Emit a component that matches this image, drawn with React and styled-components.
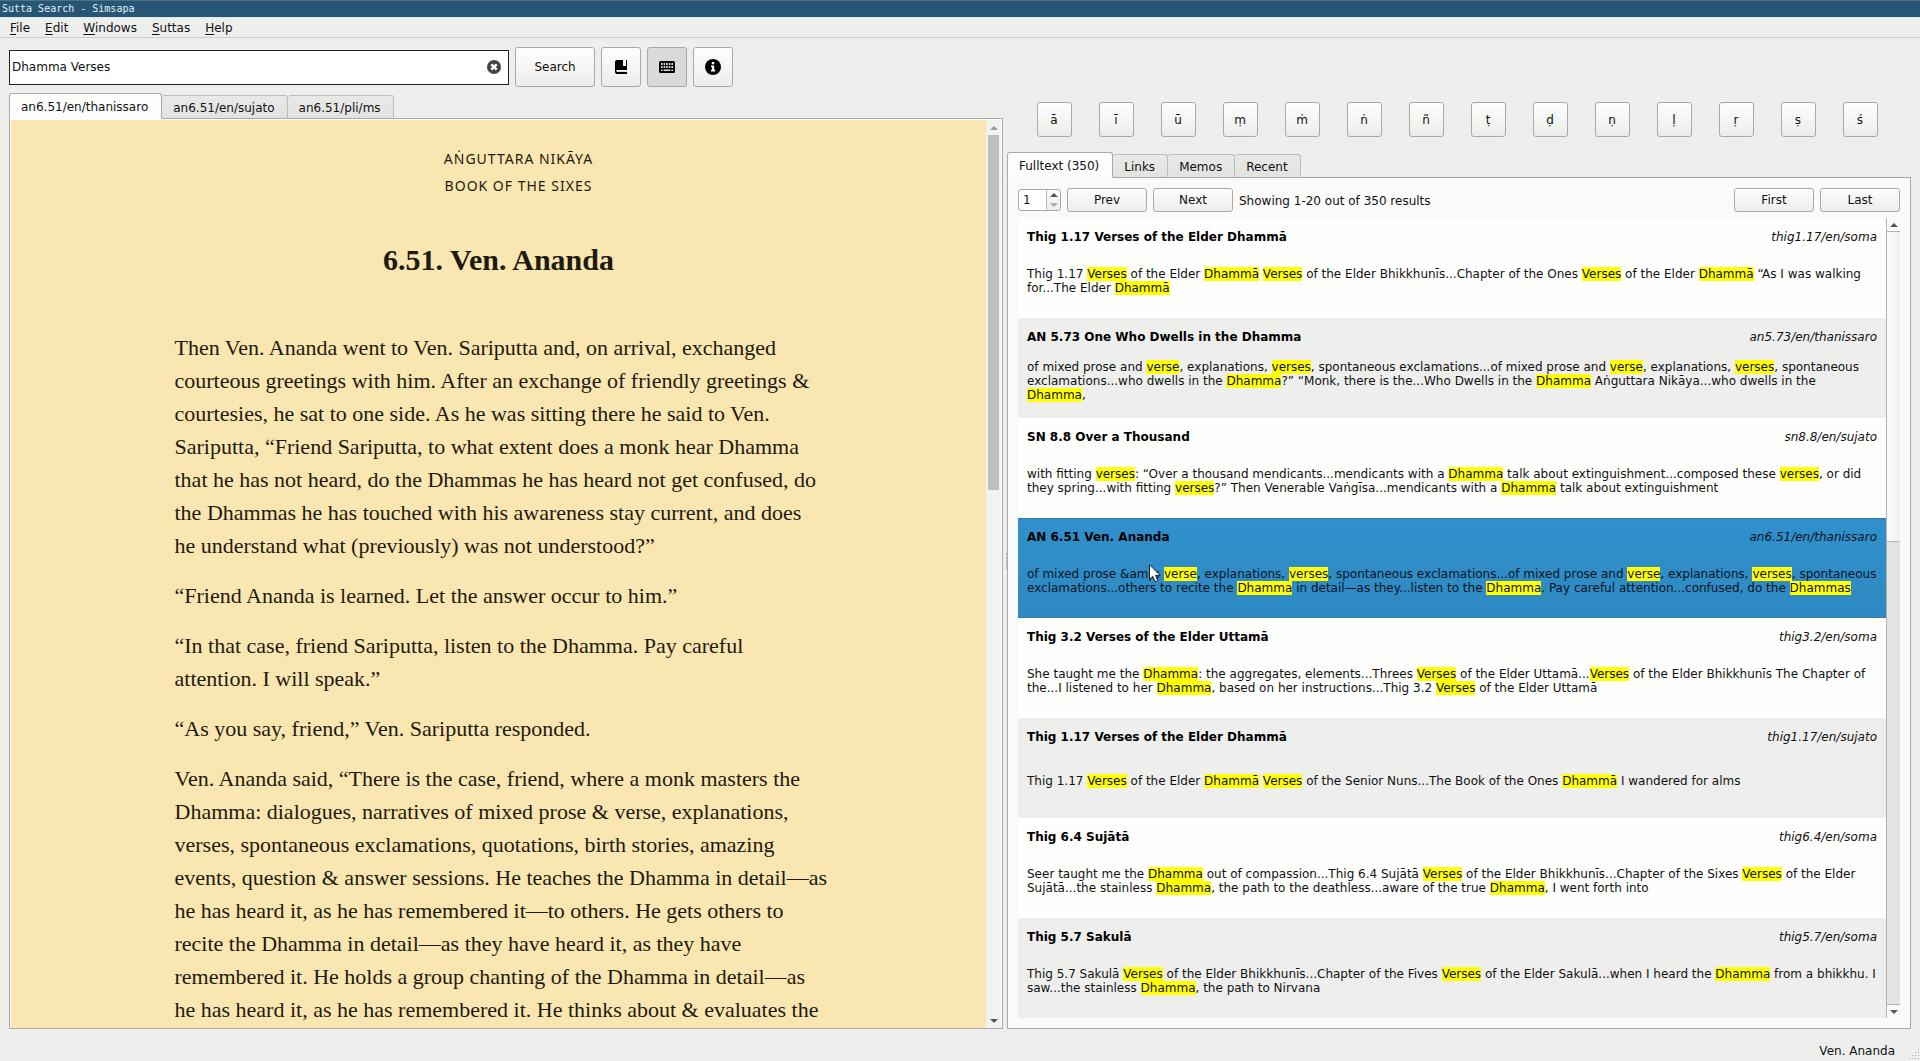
import React from "react";
import styled, { createGlobalStyle } from "styled-components";

const UI = '"DejaVu Sans", sans-serif';
const SERIF = '"Liberation Serif", serif';
const EDGE = "#a9a9a9";

const GlobalStyle = createGlobalStyle`
  *, *::before, *::after { box-sizing: border-box; }
  html, body { margin: 0; padding: 0; }
  body { background: #eeeeed; color: #111; font: 12px/14px ${UI}; overflow: hidden; }
  button, input { font: inherit; color: inherit; margin: 0; }
`;

const Window = styled.div`
  display: flex;
  flex-direction: column;
  height: 100vh;
`;

const TitleBar = styled.header`
  height: 18px;
  padding: 1px 2px 0;
  background: #265676;
  border-top: 1px solid #536f82;
  border-bottom: 1px solid #d9e9f2;
  color: #e6edf1;
  font: 10px/14px "DejaVu Sans Mono", monospace;
  white-space: pre;
`;

const MenuBar = styled.nav`
  display: flex;
  height: 20px;
  padding: 0 3px;
  border-bottom: 1px solid #cfcfce;
`;

const MenuItem = styled.button`
  padding: 1px 8px 0 7px;
  border: 0;
  background: none;
  line-height: 18px;
  span { text-decoration: underline; text-underline-offset: 2px; }
`;

const Toolbar = styled.form`
  display: flex;
  align-items: center;
  gap: 6px;
  padding: 9px 9px 6px;
`;

const SearchBox = styled.div`
  display: flex;
  align-items: center;
  flex: 0 1 500px;
  height: 35px;
  background: #fff;
  border: 1px solid #222;
`;

const SearchInput = styled.input`
  flex: 1;
  min-width: 0;
  height: 100%;
  padding: 0 2px;
  border: 0;
  outline: 0;
  background: transparent;
`;

const ClearButton = styled.button`
  display: flex;
  padding: 0 7px;
  border: 0;
  background: none;
`;

const Button = styled.button`
  display: flex;
  align-items: center;
  justify-content: center;
  flex: none;
  width: ${(p) => p.$w || 80}px;
  height: ${(p) => p.$h || 24}px;
  padding: 0;
  border: 1px solid ${EDGE};
  border-radius: 3px;
  background: ${(p) => (p.$pressed ? "#dadada" : "linear-gradient(#fefefe, #ececeb)")};
`;

const Panes = styled.main`
  display: flex;
  flex: 1;
  min-height: 0;
  padding: 0 9px;
`;

const Pane = styled.section`
  display: flex;
  flex-direction: column;
  flex: ${(p) => p.$grow} 1 0;
  min-width: 0;
`;

const Splitter = styled.div`
  align-self: center;
  width: 4px;
  height: 16px;
  border-right: 1px dotted #aaa;
`;

const Tabs = styled.div`
  display: flex;
  align-items: flex-end;
  height: 26px;
  margin-bottom: -1px;
`;

const Tab = styled.button`
  position: relative;
  height: ${(p) => (p.$active ? 26 : 24)}px;
  padding: ${(p) => (p.$active ? "2px 13px 0 11px" : "2px 12px 0 11px")};
  border: 1px solid ${(p) => (p.$active ? EDGE : "#bcbcbb")};
  border-bottom-color: ${(p) => (p.$active ? "#fdfdfd" : EDGE)};
  border-left-width: ${(p) => (p.$active ? 1 : 0)}px;
  border-radius: 3px 3px 0 0;
  background: ${(p) => (p.$active ? "#fdfdfc" : "linear-gradient(#e9e9e8, #e2e2e1)")};
  z-index: 1;
`;

const Frame = styled.div`
  display: flex;
  flex: 1;
  min-height: 0;
  border: 1px solid ${EDGE};
  padding: 1px 1px 0;
  background: #fdfdfc;
`;

const Article = styled.article`
  flex: 1;
  min-width: 0;
  overflow: hidden;
  background: #f9e6b1;
  color: #1f1a0e;
`;

const Column = styled.div`
  width: 648px;
  max-width: 100%;
  margin: 0 auto;
  padding-top: 25px;
`;

const Collection = styled.p`
  margin: 0;
  padding-left: 40px;
  text-align: center;
  text-transform: uppercase;
  font: 14px/27px "Noto Sans", sans-serif;
  letter-spacing: 1px;
`;

const Heading = styled.h1`
  margin: 41px 0 51px;
  text-align: center;
  font: bold 30px/40px ${SERIF};
`;

const Paragraph = styled.p`
  margin: 0 0 17px;
  font: 22px/33px ${SERIF};
`;

const Line = styled.span`
  display: block;
  white-space: pre;
`;

const PageScroll = styled.div`
  display: flex;
  flex-direction: column;
  align-items: center;
  flex: none;
  width: 15px;
  padding: 6px 0 5px;
  background: #f2f2f1;
`;

const PageThumb = styled.div`
  flex: 353;
  width: 11px;
  margin: 5px 0 0;
  background: #c0c0bf;
`;

const PageTrack = styled.div`
  flex: 527;
`;

const Arrow = styled.span`
  width: 0;
  height: 0;
  border: 4px solid transparent;
  ${(p) => (p.$down ? "border-bottom-width: 0; border-top-color" : "border-top-width: 0; border-bottom-color")}: ${(p) => p.$color || "#555"};
`;

const Keys = styled.div`
  display: grid;
  grid-template-columns: repeat(14, 1fr);
  justify-items: center;
  padding: 9px 20px 15px 16px;
`;

const Results = styled.div`
  display: flex;
  flex-direction: column;
  flex: 1;
  min-height: 0;
  border: 1px solid ${EDGE};
  background: #fafaf9;
  padding: 10px;
`;

const Pager = styled.div`
  display: flex;
  align-items: center;
  gap: 6px;
  margin-bottom: 6px;
`;

const PagerLabel = styled.span`
  flex: 1;
  padding-top: 2px;
`;

const Spin = styled.div`
  display: flex;
  width: 43px;
  height: 22px;
  border: 1px solid ${EDGE};
  border-radius: 3px;
  background: #fff;
`;

const SpinInput = styled.input`
  width: 28px;
  padding: 0 4px;
  border: 0;
  border-right: 1px solid #bbb;
  outline: 0;
  background: transparent;
`;

const SpinArrows = styled.div`
  display: flex;
  flex-direction: column;
  flex: 1;
  background: linear-gradient(#fafafa, #ededed);
  border-radius: 0 3px 3px 0;
`;

const SpinButton = styled.button`
  display: flex;
  align-items: center;
  justify-content: center;
  flex: 1;
  padding: 0;
  border: 0;
  background: none;
`;

const ListArea = styled.div`
  display: flex;
  flex: 1;
  min-height: 0;
`;

const List = styled.ul`
  flex: 1;
  min-width: 0;
  margin: 0;
  padding: 0;
  list-style: none;
  background: #fff;
  overflow: hidden;
`;

const Item = styled.li`
  position: relative;
  display: flex;
  flex-direction: column;
  height: 100px;
  padding: 12px 9px 9px;
  background: ${(p) => (p.$shade ? "#eeeeed" : "#fefefd")};
  ${(p) =>
    p.$selected &&
    "background: linear-gradient(#3190cc, #2d89c1); box-shadow: inset 0 1px #367aa8, inset 0 -1px #367aa8; color: #06131f;"}
`;

const ItemHead = styled.div`
  display: flex;
  justify-content: space-between;
`;

const ItemTitle = styled.h2`
  margin: 0;
  font: bold 12px/14px ${UI};
  color: #000;
`;

const ItemRef = styled.em`
  font-style: italic;
`;

const Snippet = styled.p`
  margin: auto 0;
  padding-top: 8px;
  mark { background: #ffff05; color: #111; }
`;

const Pointer = styled.svg`
  position: absolute;
  left: 131px;
  top: 46px;
`;

const ListScroll = styled.div`
  display: flex;
  flex-direction: column;
  width: 14px;
  border-left: 1px solid #b3b3b2;
  background: #e3e3e2;
`;

const ScrollCap = styled.div`
  display: flex;
  align-items: center;
  justify-content: center;
  height: 14px;
  background: #fafaf9;
  border: 0 solid #b3b3b2;
  border-width: ${(p) => (p.$down ? "1px 0 0" : "0 0 1px")};
`;

const ListThumb = styled.div`
  flex: 309;
  background: linear-gradient(90deg, #fcfcfb, #efefee);
  border-bottom: 1px solid #b3b3b2;
`;

const ListTrack = styled.div`
  flex: 463;
`;

const StatusBar = styled.footer`
  display: flex;
  justify-content: flex-end;
  align-items: flex-end;
  height: 32px;
  gap: 12px;
  line-height: 14px;
  span { padding-bottom: 3px; }
`;

const letters = "ā ī ū ṃ ṁ ṅ ñ ṭ ḍ ṇ ḷ ṛ ṣ ś".split(" ");

const paragraphs = [
  "Then Ven. Ananda went to Ven. Sariputta and, on arrival, exchanged\ncourteous greetings with him. After an exchange of friendly greetings &\ncourtesies, he sat to one side. As he was sitting there he said to Ven.\nSariputta, “Friend Sariputta, to what extent does a monk hear Dhamma\nthat he has not heard, do the Dhammas he has heard not get confused, do\nthe Dhammas he has touched with his awareness stay current, and does\nhe understand what (previously) was not understood?”",
  "“Friend Ananda is learned. Let the answer occur to him.”",
  "“In that case, friend Sariputta, listen to the Dhamma. Pay careful\nattention. I will speak.”",
  "“As you say, friend,” Ven. Sariputta responded.",
  "Ven. Ananda said, “There is the case, friend, where a monk masters the\nDhamma: dialogues, narratives of mixed prose & verse, explanations,\nverses, spontaneous exclamations, quotations, birth stories, amazing\nevents, question & answer sessions. He teaches the Dhamma in detail—as\nhe has heard it, as he has remembered it—to others. He gets others to\nrecite the Dhamma in detail—as they have heard it, as they have\nremembered it. He holds a group chanting of the Dhamma in detail—as\nhe has heard it, as he has remembered it. He thinks about & evaluates the",
];

// Matched words are wrapped in [brackets].
const results = [
  ["Thig 1.17 Verses of the Elder Dhammā", "thig1.17/en/soma", "Thig 1.17 [Verses] of the Elder [Dhammā] [Verses] of the Elder Bhikkhunīs...Chapter of the Ones [Verses] of the Elder [Dhammā] “As I was walking\nfor...The Elder [Dhammā]"],
  ["AN 5.73 One Who Dwells in the Dhamma", "an5.73/en/thanissaro", "of mixed prose and [verse], explanations, [verses], spontaneous exclamations...of mixed prose and [verse], explanations, [verses], spontaneous\nexclamations...who dwells in the [Dhamma]?” “Monk, there is the...Who Dwells in the [Dhamma] Aṅguttara Nikāya...who dwells in the\n[Dhamma],"],
  ["SN 8.8 Over a Thousand", "sn8.8/en/sujato", "with fitting [verses]: “Over a thousand mendicants...mendicants with a [Dhamma] talk about extinguishment...composed these [verses], or did\nthey spring...with fitting [verses]?” Then Venerable Vaṅgīsa...mendicants with a [Dhamma] talk about extinguishment"],
  ["AN 6.51 Ven. Ananda", "an6.51/en/thanissaro", "of mixed prose &amp; [verse], explanations, [verses], spontaneous exclamations...of mixed prose and [verse], explanations, [verses], spontaneous\nexclamations...others to recite the [Dhamma] in detail—as they...listen to the [Dhamma]. Pay careful attention...confused, do the [Dhammas]"],
  ["Thig 3.2 Verses of the Elder Uttamā", "thig3.2/en/soma", "She taught me the [Dhamma]: the aggregates, elements...Threes [Verses] of the Elder Uttamā...[Verses] of the Elder Bhikkhunīs The Chapter of\nthe...I listened to her [Dhamma], based on her instructions...Thig 3.2 [Verses] of the Elder Uttamā"],
  ["Thig 1.17 Verses of the Elder Dhammā", "thig1.17/en/sujato", "Thig 1.17 [Verses] of the Elder [Dhammā] [Verses] of the Senior Nuns...The Book of the Ones [Dhammā] I wandered for alms"],
  ["Thig 6.4 Sujātā", "thig6.4/en/soma", "Seer taught me the [Dhamma] out of compassion...Thig 6.4 Sujātā [Verses] of the Elder Bhikkhunīs...Chapter of the Sixes [Verses] of the Elder\nSujātā...the stainless [Dhamma], the path to the deathless...aware of the true [Dhamma], I went forth into"],
  ["Thig 5.7 Sakulā", "thig5.7/en/soma", "Thig 5.7 Sakulā [Verses] of the Elder Bhikkhunīs...Chapter of the Fives [Verses] of the Elder Sakulā...when I heard the [Dhamma] from a bhikkhu. I\nsaw...the stainless [Dhamma], the path to Nirvana"],
];

const highlight = (text) =>
  text.split(/[[\]]/).map((part, i) => (i % 2 ? <mark key={i}>{part}</mark> : part));

const toLines = (text) =>
  text.split("\n").map((line) => <Line key={line}>{highlight(line)}</Line>);

const ClearIcon = () => (
  <svg width="14" height="14" viewBox="0 0 14 14">
    <circle cx="7" cy="7" r="7" fill="#444" />
    <path d="M4.3 4.3l5.4 5.4m0-5.4l-5.4 5.4" stroke="#fff" strokeWidth="2.4" />
  </svg>
);

const BookIcon = () => (
  <svg width="12" height="14" viewBox="0 0 12 14">
    <path d="M2 0h6v6h3V0a1 1 0 0 1 1 1v9H1.8c-.8 0-.8 1 0 1H12v3H2a2 2 0 0 1-2-2V2a2 2 0 0 1 2-2z" />
    <path d="M1.6 11.4H12" stroke="#f4f4f3" strokeWidth="1" />
    <path d="M11 0a1 1 0 0 1 1 1v6h-1z" />
  </svg>
);

const KeyboardIcon = () => (
  <svg width="16" height="12" viewBox="0 0 16 12">
    <rect width="16" height="12" rx="1.5" />
    <path d="M2 3h12M2 6h12" stroke="#dadada" strokeWidth="2" strokeDasharray="1.6 1" />
    <path d="M2 9.2h1.6m1 0h6.8m1 0H14" stroke="#dadada" strokeWidth="1.6" />
  </svg>
);

const InfoIcon = () => (
  <svg width="16" height="16" viewBox="0 0 16 16">
    <circle cx="8" cy="8" r="8" />
    <path d="M6.8 3h2.4v2.2H6.8zM6 6.6h3.2v4.2h1v1.6H6v-1.6h1V8.2H6z" fill="#fff" />
  </svg>
);

const GripIcon = () => (
  <svg width="13" height="13" viewBox="0 0 13 13">
    <path d="M11.5 1v12M8.5 4v9M5.5 7v6M2.5 10v3" stroke="#aaa" strokeDasharray="1 2" />
  </svg>
);

export default function App() {
  return (
    <Window>
      <GlobalStyle />
      <TitleBar>Sutta Search - Simsapa</TitleBar>
      <MenuBar>
        {["File", "Edit", "Windows", "Suttas", "Help"].map((name) => (
          <MenuItem key={name}><span>{name[0]}</span>{name.slice(1)}</MenuItem>
        ))}
      </MenuBar>
      <Toolbar onSubmit={(e) => e.preventDefault()}>
        <SearchBox>
          <SearchInput aria-label="Search query" defaultValue="Dhamma Verses" />
          <ClearButton type="button" aria-label="Clear"><ClearIcon /></ClearButton>
        </SearchBox>
        <Button $h={40}>Search</Button>
        <Button type="button" $w={40} $h={40} aria-label="Dictionary"><BookIcon /></Button>
        <Button type="button" $w={40} $h={40} $pressed aria-label="Keyboard"><KeyboardIcon /></Button>
        <Button type="button" $w={40} $h={40} aria-label="Info"><InfoIcon /></Button>
      </Toolbar>
      <Panes>
        <Pane $grow={994}>
          <Tabs role="tablist">
            <Tab role="tab" $active>an6.51/en/thanissaro</Tab>
            <Tab role="tab">an6.51/en/sujato</Tab>
            <Tab role="tab">an6.51/pli/ms</Tab>
          </Tabs>
          <Frame>
            <Article>
              <Column>
                <Collection>Aṅguttara Nikāya</Collection>
                <Collection>Book of the Sixes</Collection>
                <Heading>6.51. Ven. Ananda</Heading>
                {paragraphs.map((text) => <Paragraph key={text}>{toLines(text)}</Paragraph>)}
              </Column>
            </Article>
            <PageScroll>
              <Arrow $color="#999" />
              <PageThumb />
              <PageTrack />
              <Arrow $down />
            </PageScroll>
          </Frame>
        </Pane>
        <Splitter />
        <Pane $grow={904}>
          <Keys>
            {letters.map((c) => <Button key={c} $w={35} $h={35}>{c}</Button>)}
          </Keys>
          <Tabs role="tablist">
            <Tab role="tab" $active>Fulltext (350)</Tab>
            <Tab role="tab">Links</Tab>
            <Tab role="tab">Memos</Tab>
            <Tab role="tab">Recent</Tab>
          </Tabs>
          <Results>
            <Pager>
              <Spin>
                <SpinInput aria-label="Page" defaultValue="1" />
                <SpinArrows>
                  <SpinButton aria-label="Next page"><Arrow /></SpinButton>
                  <SpinButton aria-label="Previous page"><Arrow $down $color="#aaa" /></SpinButton>
                </SpinArrows>
              </Spin>
              <Button>Prev</Button>
              <Button>Next</Button>
              <PagerLabel>Showing 1-20 out of 350 results</PagerLabel>
              <Button>First</Button>
              <Button>Last</Button>
            </Pager>
            <ListArea>
              <List>
                {results.map(([title, ref, text], i) => (
                  <Item key={ref} $shade={i % 2 === 1} $selected={i === 3}>
                    <ItemHead>
                      <ItemTitle>{title}</ItemTitle>
                      <ItemRef>{ref}</ItemRef>
                    </ItemHead>
                    <Snippet>{toLines(text)}</Snippet>
                    {i === 3 && (
                      <Pointer width="12" height="19" viewBox="0 0 12 19">
                        <path d="M.5 .8v14.6l3.3-3 2.4 5.4 2.6-1.1-2.3-5.3h4.7z" fill="#fff" stroke="#222" />
                      </Pointer>
                    )}
                  </Item>
                ))}
              </List>
              <ListScroll>
                <ScrollCap><Arrow /></ScrollCap>
                <ListThumb />
                <ListTrack />
                <ScrollCap $down><Arrow $down /></ScrollCap>
              </ListScroll>
            </ListArea>
          </Results>
        </Pane>
      </Panes>
      <StatusBar><span>Ven. Ananda</span><GripIcon /></StatusBar>
    </Window>
  );
}
